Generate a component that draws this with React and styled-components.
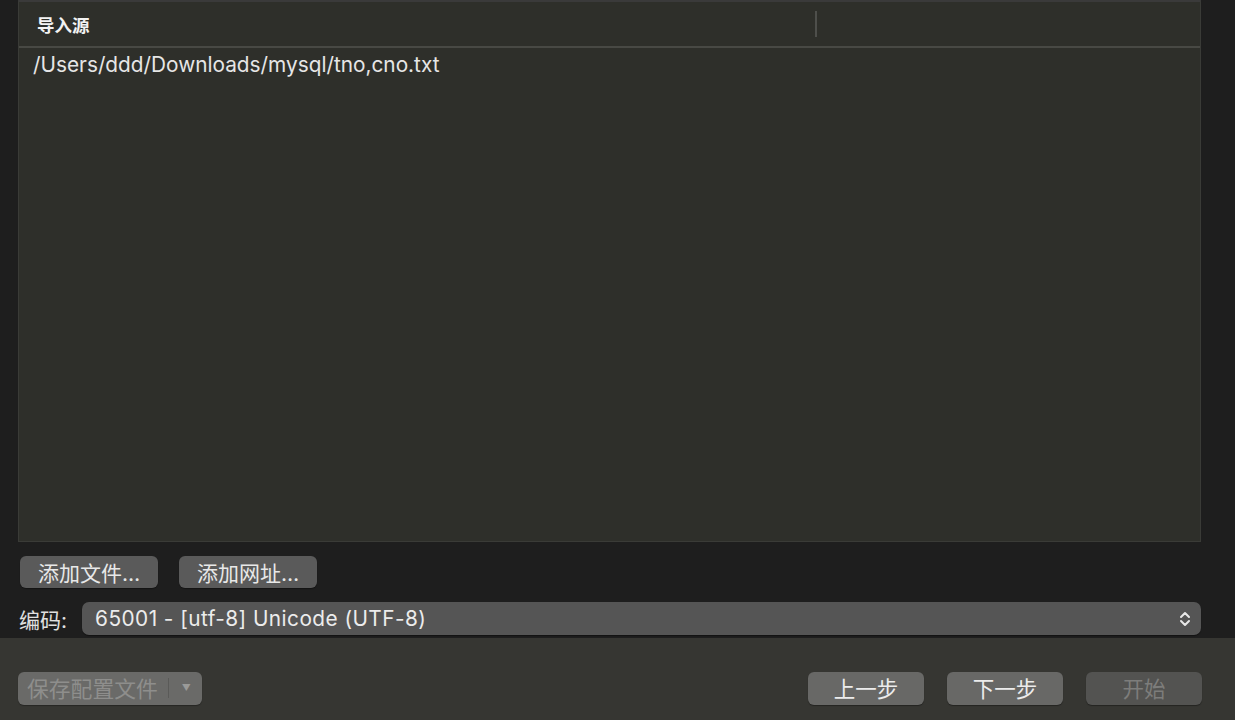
import React from 'react';
import styled, { createGlobalStyle } from 'styled-components';

const GlobalStyle = createGlobalStyle`
  html, body {
    margin: 0;
    padding: 0;
    background: #1e1e1e;
  }
  body {
    font-family: Inter, "Noto Sans CJK SC", sans-serif;
    -webkit-font-smoothing: antialiased;
  }
`;

const Window = styled.div`
  width: 1235px;
  height: 720px;
  display: flex;
  flex-direction: column;
  background: #1e1e1e;
  overflow: hidden;
`;

const Main = styled.div`
  flex: 1;
  display: flex;
  flex-direction: column;
  padding: 0 34px 0 18px;
`;

const Table = styled.div`
  height: 542px;
  box-sizing: border-box;
  background: #2e2f2a;
  border: 1px solid #3a3b37;
  border-top: 2px solid #3a3a3a;
  display: flex;
  flex-direction: column;
`;

const HeaderRow = styled.div`
  height: 44px;
  display: flex;
  align-items: center;
  border-bottom: 2px solid #484944;
`;

const HeaderCell = styled.div`
  width: ${p => p.$width || 'auto'};
  flex: ${p => (p.$width ? 'none' : 1)};
  height: 26px;
  display: flex;
  align-items: center;
  padding-left: 18px;
  box-sizing: border-box;
  color: #f2f2f2;
  font-size: 17.5px;
  font-weight: 700;
  border-right: ${p => (p.$divider ? '2px solid #4e4f4b' : 'none')};
`;

const Row = styled.div`
  padding: 3px 14px;
  color: #e6e6e6;
  font-size: 20.8px;
  line-height: 28px;
`;

const ButtonRow = styled.div`
  display: flex;
  gap: 21px;
  margin-top: 14px;
  padding-left: 2px;
`;

const Button = styled.div`
  height: 33px;
  width: ${p => p.$width || '138px'};
  box-sizing: border-box;
  padding-bottom: 2px;
  border-radius: 6px;
  background: ${p => (p.$disabled ? '#535351' : '#686866')};
  color: ${p => (p.$disabled ? '#7d7d7b' : '#ececec')};
  display: flex;
  align-items: center;
  justify-content: center;
  font-size: 21.5px;
  box-shadow: 0 1px 1px rgba(0, 0, 0, 0.35);
`;

const SmallButton = styled(Button)`
  height: 32px;
  padding-bottom: 1px;
  background: #5a5a5a;
  color: #e8e8e8;
  font-size: 21px;
`;

const EncodingRow = styled.div`
  display: flex;
  align-items: center;
  margin-top: 14px;
  padding-left: 1px;
  gap: 15px;
`;

const Label = styled.span`
  color: #e0e0e0;
  font-size: 21px;
`;

const Select = styled.div`
  flex: 1;
  height: 33px;
  box-sizing: border-box;
  border-radius: 7px;
  background: #555555;
  color: #ececec;
  font-size: 20.8px;
  letter-spacing: 0.45px;
  display: flex;
  align-items: center;
  justify-content: space-between;
  padding: 0 10px 0 13px;
  box-shadow: 0 1px 1px rgba(0, 0, 0, 0.4);
`;

const Footer = styled.div`
  height: 82px;
  background: #363632;
  display: flex;
  align-items: flex-start;
  padding: 34px 33px 0 18px;
  box-sizing: border-box;
`;

const SaveButton = styled.div`
  width: 184px;
  height: 33px;
  box-sizing: border-box;
  border-radius: 6px;
  background: #6a6a68;
  color: #8e8e8c;
  font-size: 21.8px;
  display: flex;
  align-items: center;
  padding: 0 0 2px 9px;
  box-shadow: 0 1px 1px rgba(0, 0, 0, 0.3);
`;

const SaveDivider = styled.span`
  width: 1px;
  height: 20px;
  background: #5a5a58;
  margin: 0 13px 0 10px;
`;

const Caret = styled.span`
  font-size: 9px;
  color: #9a9a98;
`;

const Spacer = styled.div`
  flex: 1;
`;

const NavGroup = styled.div`
  display: flex;
  gap: 23px;
`;

const Chevrons = () => (
  <svg width="12" height="18" viewBox="0 0 12 18" fill="none" stroke="#e8e8e8" strokeWidth="2" strokeLinecap="round" strokeLinejoin="round">
    <path d="M2 7l4-4 4 4" />
    <path d="M2 11l4 4 4-4" />
  </svg>
);

export default function App() {
  return (
    <Window>
      <GlobalStyle />
      <Main>
        <Table>
          <HeaderRow>
            <HeaderCell $width="798px" $divider>导入源</HeaderCell>
            <HeaderCell />
          </HeaderRow>
          <Row>/Users/ddd/Downloads/mysql/tno,cno.txt</Row>
        </Table>
        <ButtonRow>
          <SmallButton>添加文件…</SmallButton>
          <SmallButton>添加网址…</SmallButton>
        </ButtonRow>
        <EncodingRow>
          <Label>编码:</Label>
          <Select>
            <span>65001 - [utf-8] Unicode (UTF-8)</span>
            <Chevrons />
          </Select>
        </EncodingRow>
      </Main>
      <Footer>
        <SaveButton>
          保存配置文件
          <SaveDivider />
          <Caret>▼</Caret>
        </SaveButton>
        <Spacer />
        <NavGroup>
          <Button $width="116px">上一步</Button>
          <Button $width="116px">下一步</Button>
          <Button $width="116px" $disabled>开始</Button>
        </NavGroup>
      </Footer>
    </Window>
  );
}
